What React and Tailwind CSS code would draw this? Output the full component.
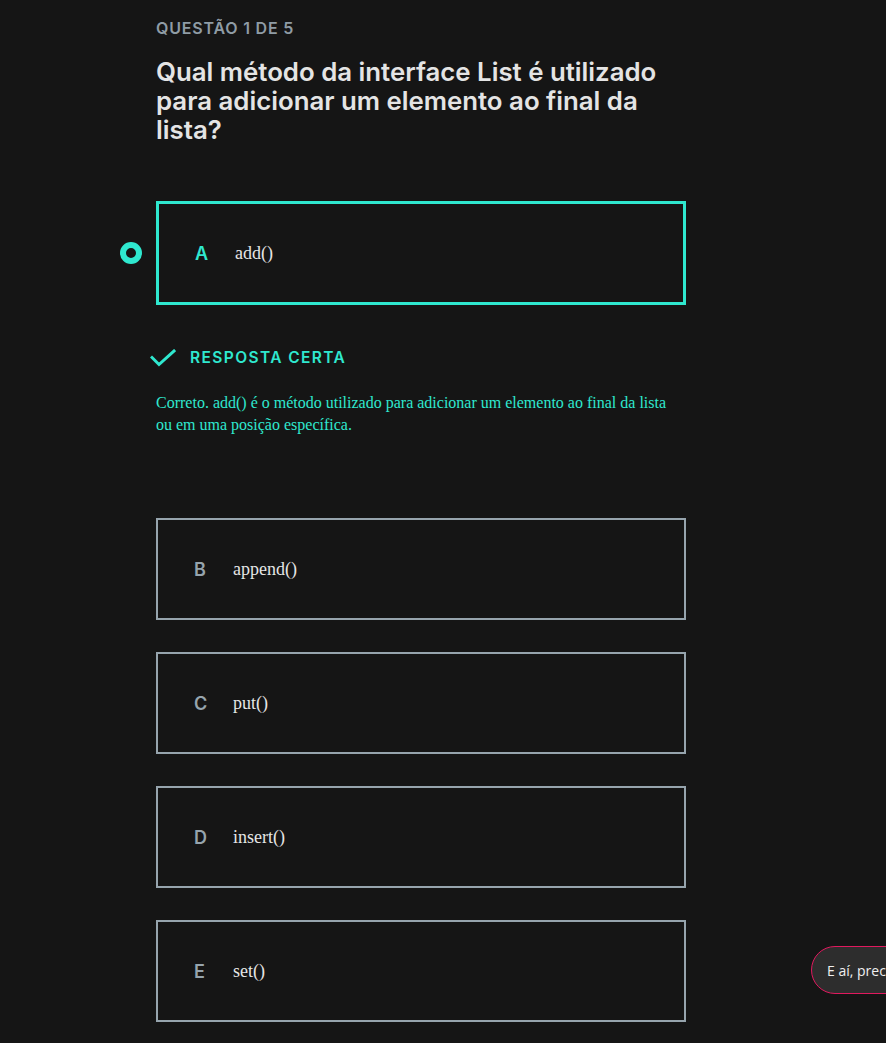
import React from "react";

const teal = "#2fe8cf";

function Option({ letter, text }) {
  return (
    <div className="h-[102px] border-2 border-[#96a4ad] flex items-center pl-[36px]">
      <span className="w-[39px] text-[18px] font-semibold text-[#96a4ad]" style={{ fontFamily: "Inter, sans-serif" }}>{letter}</span>
      <span className="text-[18px] text-[#e6e6e6]" style={{ fontFamily: '"Liberation Serif", serif' }}>{text}</span>
    </div>
  );
}

export default function App() {
  return (
    <div className="min-h-[1043px] bg-[#151515] relative overflow-hidden" style={{ fontFamily: "Inter, sans-serif" }}>
      <div className="ml-[156px] w-[530px] pt-[18px]">
        <div className="text-[16px] font-semibold text-[#8f9ca5] tracking-[0.8px] leading-[20px]">QUESTÃO 1 DE 5</div>
        <h1 className="mt-[19px] text-[25.8px] font-semibold text-[#e4e4e4] leading-[29px]">
          Qual método da interface List é utilizado para adicionar um elemento ao final da lista?
        </h1>

        <div className="relative mt-[57px]">
          <div className="absolute left-[-36px] top-[41px] w-[22px] h-[22px] rounded-full border-[6px] border-[#2fe8cf]" />
          <div className="h-[104px] border-[3px] border-[#2fe8cf] flex items-center pl-[36px]">
            <span className="w-[40px] text-[18px] font-semibold text-[#2fe8cf]">A</span>
            <span className="text-[18px] text-[#e6e6e6]" style={{ fontFamily: '"Liberation Serif", serif' }}>add()</span>
          </div>
        </div>

        <div className="mt-[41px] flex items-center -ml-[6px]">
          <svg width="26" height="18" viewBox="0 0 26 18" fill="none">
            <path d="M2 8.5 L9 15.5 L24 2" stroke={teal} strokeWidth="3" strokeLinecap="square" />
          </svg>
          <span className="ml-[14px] text-[15.5px] font-semibold text-[#2fe8cf] tracking-[1.4px]">RESPOSTA CERTA</span>
        </div>

        <p className="mt-[23px] text-[16px] leading-[22px] text-[#2fe8cf]" style={{ fontFamily: '"Liberation Serif", serif' }}>
          Correto. add() é o método utilizado para adicionar um elemento ao final da lista ou em uma posição específica.
        </p>

        <div className="mt-[82px] flex flex-col gap-[32px]">
          <Option letter="B" text="append()" />
          <Option letter="C" text="put()" />
          <Option letter="D" text="insert()" />
          <Option letter="E" text="set()" />
        </div>
      </div>

      <div className="absolute left-[811px] top-[946px] h-[48px] w-[200px] rounded-full border border-[#e0195e] bg-[#2d2d2d] flex items-center pl-[15px]">
        <span className="text-[14px] text-[#f0f0f0] whitespace-nowrap" style={{ fontFamily: '"Open Sans", sans-serif' }}>E aí, precisa de ajuda?</span>
      </div>
    </div>
  );
}
